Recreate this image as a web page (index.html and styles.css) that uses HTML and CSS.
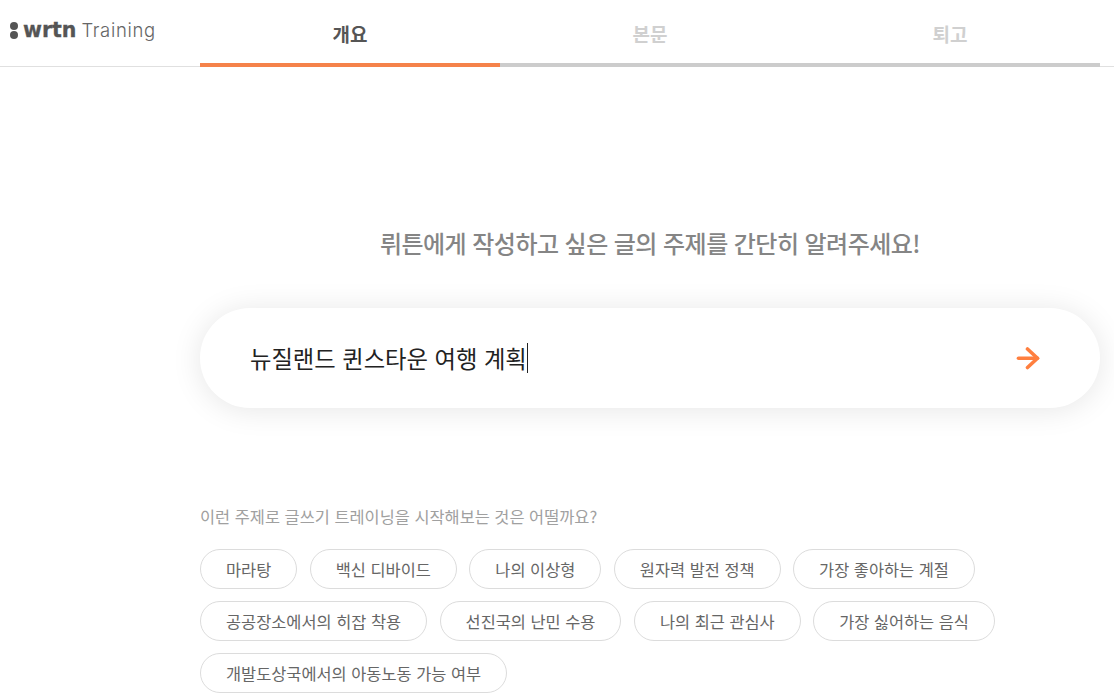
FILE: index.html
```html
<!DOCTYPE html>
<html lang="ko">
<head>
    <meta charset="UTF-8">
    <meta name="viewport" content="width=device-width, initial-scale=1.0">
    <title>wrtn Training</title>
    <link rel="stylesheet" href="styles.css">
</head>
<body>

    <div class="header">
        <div class="logo">
            <span class="logo-dots"><i></i><i></i></span>
            <span class="logo-name">wrtn</span>
            <span class="logo-sub">Training</span>
        </div>
        <div class="tabs">
            <div class="tab active">개요</div>
            <div class="tab">본문</div>
            <div class="tab">퇴고</div>
        </div>
    </div>

    <div class="container">
        <h1 class="title">뤼튼에게 작성하고 싶은 글의 주제를 간단히 알려주세요!</h1>

        <div class="topic-box">
            <div class="topic-text">뉴질랜드 퀸스타운 여행 계획<span class="caret"></span></div>
            <svg class="arrow" width="24" height="24" viewBox="0 0 24 24" fill="none" stroke="#ff7f3f" stroke-width="3.6" stroke-linecap="round" stroke-linejoin="round">
                <path d="M2.5 12.3H21.5"></path>
                <path d="M11.5 3L21.5 12.3L11.5 21.5"></path>
            </svg>
        </div>

        <p class="hint">이런 주제로 글쓰기 트레이닝을 시작해보는 것은 어떨까요?</p>

        <div class="chips">
            <button class="chip">마라탕</button>
            <button class="chip">백신 디바이드</button>
            <button class="chip">나의 이상형</button>
            <button class="chip">원자력 발전 정책</button>
            <button class="chip">가장 좋아하는 계절</button>
            <button class="chip">공공장소에서의 히잡 착용</button>
            <button class="chip">선진국의 난민 수용</button>
            <button class="chip">나의 최근 관심사</button>
            <button class="chip">가장 싫어하는 음식</button>
            <button class="chip">개발도상국에서의 아동노동 가능 여부</button>
        </div>
    </div>

</body>
</html>
```

FILE: styles.css
```css
html, body {
    height: 699px;
    overflow: hidden;
}
body {
    font-family: "Noto Sans CJK KR", "Noto Sans", sans-serif;
    margin: 0;
    padding: 0;
    background: #ffffff;
    color: #333;
}
.header {
    display: flex;
    height: 66px;
    padding-right: 14px;
    border-bottom: 1px solid #e0e0e0;
}
.logo {
    width: 190px;
    margin-left: 10px;
    height: 60px;
    display: flex;
    align-items: center;
    color: #555;
}
.logo-dots {
    display: flex;
    flex-direction: column;
    gap: 1px;
    margin-right: 5px;
}
.logo-dots i {
    display: block;
    width: 8px;
    height: 8px;
    border-radius: 50%;
    background: #555;
}
.logo-name {
    font-family: "DejaVu Sans", sans-serif;
    font-weight: 700;
    font-size: 20.5px;
    -webkit-text-stroke: 0.3px #555;
    margin-right: 5px;
}
.logo-sub {
    font-family: "Inter", sans-serif;
    font-weight: 300;
    font-size: 18.5px;
    letter-spacing: 0.65px;
    color: #666;
}
.tabs {
    display: flex;
    flex: 1;
}
.tab {
    flex: 1;
    height: 63px;
    line-height: 68px;
    border-bottom: 4px solid #cccccc;
    text-align: center;
    font-size: 19px;
    font-weight: 700;
    color: #d0d0d0;
}
.tab.active {
    color: #555;
    border-bottom-color: #f5824a;
}
.container {
    margin: 0 14px 0 200px;
}
.title {
    margin: 156px 0 0;
    height: 40px;
    line-height: 40px;
    text-align: center;
    font-size: 24px;
    font-weight: 500;
    letter-spacing: -0.55px;
    color: #858585;
}
.topic-box {
    display: flex;
    align-items: center;
    justify-content: space-between;
    height: 100px;
    margin-top: 45px;
    padding: 0 60px 0 50px;
    border-radius: 50px;
    background: #fff;
    box-shadow: 0 2px 30px rgba(0, 0, 0, 0.1);
}
.topic-text {
    display: flex;
    align-items: center;
    font-size: 23.3px;
    color: #222;
}
.caret {
    display: inline-block;
    width: 1px;
    height: 30px;
    background: #222;
}
.arrow {
    display: block;
}
.hint {
    margin: 96px 0 0;
    height: 24px;
    line-height: 24px;
    font-size: 16.4px;
    color: #a0a0a0;
}
.chips {
    display: flex;
    flex-wrap: wrap;
    gap: 12px 12.5px;
    margin-top: 21px;
    width: 820px;
}
.chip {
    height: 40px;
    padding: 0 25px;
    border: 1px solid #dcdcdc;
    border-radius: 20px;
    background: #fff;
    font-family: inherit;
    font-size: 16.4px;
    color: #666;
}
```
